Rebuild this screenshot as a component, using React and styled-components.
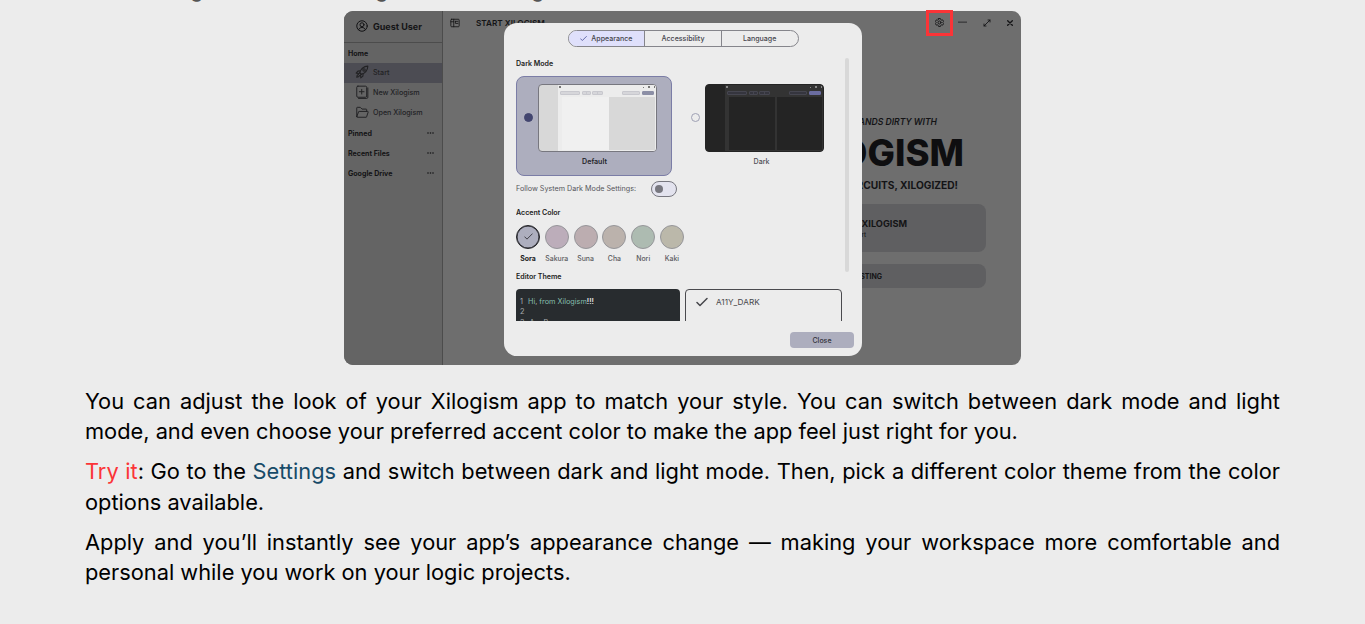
import React from "react";
import styled, { createGlobalStyle } from "styled-components";

const GlobalStyle = createGlobalStyle`
  * { box-sizing: border-box; }
  body { margin: 0; background: #ececec; font-family: Inter, "Liberation Sans", sans-serif; overflow: hidden; }
  p { margin: 0; }
  svg { display: block; flex: none; }
`;

const Page = styled.main`
  width: 1365px;
  height: 624px;
  overflow: hidden;
  display: flex;
  flex-direction: column;
  color: #000;
`;

const PreviousLine = styled.div`
  height: 11px;
  flex: none;
  display: flex;
  padding-left: 190px;
  overflow: hidden;
  font-size: 21.8px;
  line-height: 30px;
  color: #555;
`;
const Descender = styled.span`
  width: ${(p) => p.$w}px;
  flex: none;
  margin-top: -26px;
`;

const AppFrame = styled.section`
  position: relative;
  width: 677px;
  height: 354px;
  flex: none;
  margin-left: 344px;
  display: flex;
  border-radius: 9px;
  background: #6e6e6e;
  color: #141416;
`;

const Sidebar = styled.nav`
  width: 99px;
  background: #646464;
  border-right: 1px solid #4c4c4c;
  border-radius: 9px 0 0 9px;
`;
const UserBar = styled.div`
  height: 32px;
  display: flex;
  align-items: center;
  gap: 5px;
  padding: 0 0 1px 12px;
  border-bottom: 1px solid #4c4c4c;
  font-size: 9px;
  font-weight: 700;
`;
const SideHeading = styled.div`
  height: ${(p) => p.$h || 20}px;
  display: flex;
  align-items: center;
  justify-content: space-between;
  padding: 1px 8px 0 4px;
  font-size: 7.05px;
  font-weight: 700;
`;
const SideItem = styled.div`
  height: 20px;
  display: flex;
  align-items: center;
  gap: 4px;
  padding: 0 0 1px 11px;
  font-size: 7.15px;
  font-weight: 500;
  color: #222224;
  background: ${(p) => (p.$active ? "#4c4c53" : "transparent")};
`;

const Workspace = styled.div`
  flex: 1;
  display: flex;
  flex-direction: column;
  align-items: flex-end;
`;
const TitleBar = styled.header`
  align-self: stretch;
  height: 23px;
  display: flex;
  align-items: center;
  padding: 0 7px;
  font-size: 8.2px;
  font-weight: 600;
`;
const Title = styled.span`
  margin-left: 16px;
  flex: 1;
`;
const SettingsBox = styled.span`
  width: 27px;
  height: 26px;
  flex: none;
  display: grid;
  place-items: center;
  padding-right: 1px;
  border: 3px solid #fb3437;
`;
const WindowControls = styled.span`
  display: flex;
  align-items: center;
  gap: 15.5px;
  padding-left: 5px;
`;
const Tagline = styled.div`
  margin: 82px 84px 0 0;
  line-height: 12px;
  font-size: 8.6px;
  font-weight: 600;
  font-style: italic;
`;
const Wordmark = styled.div`
  margin: 4px 57px 0 0;
  line-height: 42px;
  font-size: 36.5px;
  font-weight: 800;
  color: #0e0e10;
`;
const Slogan = styled.div`
  margin: 4px 63px 0 0;
  line-height: 14px;
  font-size: 10.2px;
  font-weight: 700;
`;
const StartCard = styled.div`
  width: 440px;
  height: ${(p) => p.$h}px;
  margin: ${(p) => p.$top}px 35px 0 0;
  padding: 1px ${(p) => p.$pr}px 0 0;
  display: flex;
  flex-direction: column;
  justify-content: center;
  align-items: flex-end;
  border-radius: 8px;
  background: #5f5f61;
  font-size: ${(p) => p.$size}px;
  line-height: 12px;
  font-weight: 700;
`;
const CardHint = styled.small`
  padding-right: 41px;
  font-size: 6px;
  line-height: 10px;
  font-weight: 500;
`;

const Modal = styled.div`
  position: absolute;
  left: 160px;
  top: 11.5px;
  width: 357.5px;
  height: 333.5px;
  display: flex;
  flex-direction: column;
  padding: 7.5px 7.5px 8px 12px;
  border-radius: 13px;
  background: #ececec;
  color: #1c1c22;
`;
const Tabs = styled.div`
  display: flex;
  width: 231px;
  height: 16.5px;
  margin-left: 51.5px;
  flex: none;
  border: 1px solid #85858b;
  border-radius: 9px;
  overflow: hidden;
`;
const Tab = styled.div`
  flex: 1;
  display: flex;
  align-items: center;
  justify-content: center;
  gap: 4px;
  font-size: 7.05px;
  font-weight: 500;
  color: #45454c;
  background: ${(p) => (p.$active ? "#dfe0fb" : "transparent")};
  & + & { border-left: 1px solid #85858b; }
`;
const ScrollArea = styled.div`
  display: flex;
  justify-content: space-between;
  height: 263px;
  margin-top: 11px;
  overflow: hidden;
`;
const ScrollThumb = styled.div`
  width: 4px;
  height: 214px;
  margin-right: 5px;
  border-radius: 2px;
  background: #d8d8d8;
`;
const Settings = styled.div`
  width: 326px;
`;
const Heading = styled.h3`
  margin: 0;
  padding-top: ${(p) => p.$top || 0}px;
  font-size: 7.05px;
  line-height: 10px;
  font-weight: 600;
`;
const ModeRow = styled.div`
  display: flex;
  gap: 11px;
  margin-top: 7px;
`;
const ModeCard = styled.div`
  width: 156px;
  height: 100px;
  display: flex;
  gap: 5px;
  padding: 7px 0 0 7px;
  border: 1px solid ${(p) => (p.$active ? "#7b7da6" : "transparent")};
  border-radius: 8px;
  background: ${(p) => (p.$active ? "#adaebe" : "transparent")};
`;
const Radio = styled.span`
  width: 9px;
  height: 9px;
  margin-top: 29px;
  flex: none;
  border-radius: 50%;
  border: 1.4px solid ${(p) => (p.$active ? "#42456f" : "#9fa1b4")};
  background: ${(p) => (p.$active ? "#42456f" : "transparent")};
`;
const ModeFigure = styled.div`
  display: flex;
  flex-direction: column;
  align-items: center;
  gap: 5px;
  font-size: 7.1px;
  line-height: 10px;
  font-weight: ${(p) => (p.$bold ? 600 : 500)};
  color: ${(p) => (p.$bold ? "#25252b" : "#505056")};
`;
const ModeLabel = styled.span`
  padding-right: 6px;
`;

const Preview = styled.div`
  width: 119px;
  height: 68px;
  display: flex;
  overflow: hidden;
  border: 1px solid ${(p) => p.$c.edge};
  border-radius: 4px;
  background: ${(p) => p.$c.side};
`;
const PreviewMain = styled.div`
  flex: 1;
  margin-left: 19px;
  padding: 0 1px 1px;
  display: flex;
  flex-direction: column;
  background: ${(p) => p.$c.bar};
`;
const PreviewTop = styled.div`
  height: 6px;
  display: flex;
  gap: 4px;
  align-items: center;
  padding: 0 0 1px 0;
`;
const Dot = styled.i`
  width: 1.5px;
  height: ${(p) => p.$h || 1.5}px;
  background: ${(p) => p.$c.ink};
  &:first-child { margin-right: auto; }
`;
const PreviewTools = styled.div`
  height: 4px;
  display: flex;
  padding: 0 1px;
  gap: 1.5px;
`;
const Chip = styled.i`
  width: ${(p) => p.$w}px;
  height: 4px;
  flex: none;
  border-radius: 1px;
  border: 1px solid ${(p) => (p.$primary ? p.$c.primary : p.$c.chipEdge)};
  background: ${(p) => (p.$primary ? p.$c.primary : p.$c.chip)};
  margin-left: ${(p) => (p.$push ? "auto" : 0)};
`;
const SplitChip = styled(Chip)`
  display: flex;
  justify-content: center;
  &::after { content: ""; width: 1px; background: ${(p) => p.$c.chipEdge}; }
`;
const PreviewPanes = styled.div`
  flex: 1;
  display: flex;
  gap: ${(p) => p.$c.gap}px;
  margin-top: 2px;
  padding-left: 3px;
`;
const Pane = styled.i`
  flex: 1;
  background: ${(p) => p.$bg};
`;

const FollowRow = styled.div`
  height: 16px;
  margin-top: 5px;
  display: flex;
  align-items: center;
  gap: 14.5px;
  font-size: 7.2px;
  color: #55555a;
`;
const Toggle = styled.span`
  width: 26px;
  height: 16px;
  padding: 3px;
  border: 1.3px solid #77777f;
  border-radius: 8px;
  background: #e3e3ee;
  &::before {
    content: "";
    display: block;
    width: 8px;
    height: 8px;
    border-radius: 50%;
    background: #77777f;
  }
`;
const Swatches = styled.div`
  display: flex;
  margin-top: 7px;
`;
const Swatch = styled.div`
  width: 28.8px;
  flex: none;
  margin-left: ${(p) => (p.$active ? -2.4 : 0)}px;
  display: flex;
  flex-direction: column;
  align-items: center;
  gap: 5px;
  font-size: 6.9px;
  line-height: 10px;
  white-space: nowrap;
  font-weight: ${(p) => (p.$active ? 700 : 500)};
  color: ${(p) => (p.$active ? "#1c1c22" : "#5b5b60")};
`;
const Disc = styled.span`
  width: 24px;
  height: 24px;
  display: grid;
  place-items: center;
  border-radius: 50%;
  border: 1px solid ${(p) => (p.$active ? "#222226" : "#96969a")};
  box-shadow: ${(p) => (p.$active ? "inset 0 0 0 0.5px #222226" : "none")};
  background: ${(p) => p.$bg};
`;
const ThemeRow = styled.div`
  display: flex;
  gap: 5px;
  margin-top: 7px;
`;
const CodeSample = styled.div`
  width: 164px;
  height: 60px;
  flex: none;
  padding: 8px 4px;
  border-radius: 4px 4px 0 0;
  background: #282c2f;
  color: #a9adb0;
  font-size: 7.3px;
  line-height: 10.5px;
`;
const CodeLine = styled.div`
  display: flex;
  gap: 5px;
`;
const Mint = styled.span`
  color: #86bfae;
`;
const Bang = styled.span`
  color: #e4e4e4;
  font-weight: 600;
`;
const ThemeName = styled.div`
  width: 157px;
  height: 60px;
  display: flex;
  gap: 8px;
  padding: 6px 10px;
  border: 1px solid #4a4a4e;
  border-radius: 4px;
  font-size: 8.2px;
  line-height: 12px;
  color: #47474b;
`;
const CloseButton = styled.button`
  align-self: flex-end;
  width: 64px;
  height: 16px;
  margin-top: auto;
  padding: 0.5px 0 0;
  border: 0;
  border-radius: 4px;
  background: #adaebe;
  color: #33333a;
  font: 500 7px/16px Inter, sans-serif;
`;

const Article = styled.article`
  width: 1195px;
  margin: 21px 0 0 85px;
  display: flex;
  flex-direction: column;
  gap: 9.9px;
  font-size: 21.8px;
  line-height: 30.3px;
  text-align: justify;
`;
const Accent = styled.span`
  color: ${(p) => p.$color};
`;

const light = { edge: "#77777f", side: "#d8d8d8", bar: "#ececec", ink: "#777", chip: "#d6d6da", chipEdge: "#c8c8ce", primary: "#8c8fa6", gap: 0 };
const dark = { edge: "#242424", side: "#242424", bar: "#333333", ink: "#888", chip: "#35353e", chipEdge: "#464650", primary: "#6a6ca0", gap: 2 };

function WindowPreview({ c, left, right }) {
  return (
    <Preview $c={c}>
      <PreviewMain $c={c}>
        <PreviewTop><Dot $c={c} /><Dot $c={c} $h={1} /><Dot $c={c} /><Dot $c={c} /></PreviewTop>
        <PreviewTools>
          <Chip $c={c} $w={20} /><SplitChip $c={c} $w={9} /><SplitChip $c={c} $w={10.5} />
          <Chip $c={c} $w={18} $push /><Chip $c={c} $w={12.5} $primary />
        </PreviewTools>
        <PreviewPanes $c={c}><Pane $bg={left} /><Pane $bg={right} /></PreviewPanes>
      </PreviewMain>
    </Preview>
  );
}

function Icon({ size, sw = 1.5, children }) {
  return (
    <svg width={size} height={size} viewBox="0 0 24 24" fill="none" stroke="currentColor" strokeWidth={sw} strokeLinecap="round" strokeLinejoin="round">
      {children}
    </svg>
  );
}
const Check = ({ size, sw = 2 }) => <Icon size={size} sw={sw}><path d="M2 13l6 6L22 5" /></Icon>;
const More = () => (
  <svg width="7" height="2" viewBox="0 0 7 2" fill="currentColor">
    <circle cx="1" cy="1" r=".8" /><circle cx="3.5" cy="1" r=".8" /><circle cx="6" cy="1" r=".8" />
  </svg>
);

const accents = [
  ["Sora", "#adaebe"], ["Sakura", "#bcadba"], ["Suna", "#bcadb0"],
  ["Cha", "#bbb2ac"], ["Nori", "#adbbb1"], ["Kaki", "#bbb8aa"],
];

export default function App() {
  return (
    <Page>
      <GlobalStyle />
      <PreviousLine>
        <Descender $w={185}>g</Descender><Descender $w={156}>g</Descender><Descender $w={20}>g</Descender>
      </PreviousLine>
      <AppFrame>
        <Sidebar>
          <UserBar>
            <Icon size={12} sw={2}>
              <circle cx="12" cy="12" r="10.5" /><circle cx="12" cy="9.5" r="4" /><path d="M5 19.500c1.500-3.200 4-4.500 7-4.500s5.500 1.300 7 4.500" />
            </Icon>
            Guest User
          </UserBar>
          <SideHeading $h={19.5}>Home</SideHeading>
          <SideItem $active>
            <Icon size={14} sw={1.9}>
              <path d="M8 13C10 7 14 2.500 22 2c-.5 8-5 12-11 14z" /><circle cx="15.500" cy="8.500" r="2" />
              <path d="M9 10l-4 .5L2 14l5 .5M14 15l-.5 4L10 22l-.5-5M6 16c-2 1-3 3-3 5 2 0 4-1 5-3M8 13l3 3" />
            </Icon>
            Start
          </SideItem>
          <SideItem>
            <Icon size={14} sw={1.7}><path d="M5 2h13a2 2 0 0 1 2 2v15a2 2 0 0 1-2 2H5a2 2 0 0 1-2-2V4a2 2 0 0 1 2-2zM11.500 7.500v8M7.500 11.500h8M22 5v16a2 2 0 0 1-2 2H6" /></Icon>
            New Xilogism
          </SideItem>
          <SideItem>
            <Icon size={14} sw={1.7}><path d="M3 20V5a1 1 0 0 1 1-1h5l3 3h7a1 1 0 0 1 1 1v3M3 20l3-8a1 1 0 0 1 1-1h14.500a1 1 0 0 1 1 1.300L20 20a1 1 0 0 1-1 1H4a1 1 0 0 1-1-1z" /></Icon>
            Open Xilogism
          </SideItem>
          <SideHeading>Pinned <More /></SideHeading>
          <SideHeading>Recent Files <More /></SideHeading>
          <SideHeading>Google Drive <More /></SideHeading>
        </Sidebar>
        <Workspace>
          <TitleBar>
            <Icon size={10} sw={2}><rect x="2" y="3" width="20" height="18" rx="2" /><path d="M9 3v18M2 9h7M13 8v5h6M13 8h6" /></Icon>
            <Title>START XILOGISM</Title>
            <SettingsBox>
              <Icon size={9} sw={2.4}>
                <path d="M9.500 1.500h5l1 3 2 1.200 3-.7 2.500 4.300-2 2.200v1l2 2.200-2.500 4.300-3-.7-2 1.200-1 3h-5l-1-3-2-1.200-3 .7L1 14.700l2-2.200v-1L1 9.300 3.500 5l3 .7 2-1.200z" />
                <circle cx="12" cy="12" r="4" />
              </Icon>
            </SettingsBox>
            <WindowControls>
              <Icon size={9} sw={2}><path d="M1 11h22" /></Icon>
              <Icon size={8} sw={2.6}><path d="M15 3h6v6M21 3l-18 18M9 21H3v-6" /></Icon>
              <Icon size={8} sw={4}><path d="M5 5l14 14M19 5L5 19" /></Icon>
            </WindowControls>
          </TitleBar>
          <Tagline>HANDS DIRTY WITH</Tagline>
          <Wordmark>XILOGISM</Wordmark>
          <Slogan>CIRCUITS, XILOGIZED!</Slogan>
          <StartCard $h={48} $top={12} $pr={79} $size={9.2}>XILOGISM<CardHint>Start</CardHint></StartCard>
          <StartCard $h={24} $top={12} $pr={104} $size={7}>EXISTING</StartCard>
        </Workspace>

        <Modal>
          <Tabs>
            <Tab $active><Accent $color="#555ca0"><Check size={7} sw={3} /></Accent>Appearance</Tab>
            <Tab>Accessibility</Tab>
            <Tab>Language</Tab>
          </Tabs>
          <ScrollArea>
            <Settings>
              <Heading $top={1}>Dark Mode</Heading>
              <ModeRow>
                <ModeCard $active>
                  <Radio $active />
                  <ModeFigure $bold><WindowPreview c={light} left="#f0f0f0" right="#d8d8d8" /><ModeLabel>Default</ModeLabel></ModeFigure>
                </ModeCard>
                <ModeCard>
                  <Radio />
                  <ModeFigure><WindowPreview c={dark} left="#242424" right="#242424" /><ModeLabel>Dark</ModeLabel></ModeFigure>
                </ModeCard>
              </ModeRow>
              <FollowRow>Follow System Dark Mode Settings: <Toggle /></FollowRow>
              <Heading $top={11}>Accent Color</Heading>
              <Swatches>
                {accents.map(([name, color], i) => (
                  <Swatch key={name} $active={i === 0}>
                    <Disc $bg={color} $active={i === 0}>{i === 0 && <Check size={9} />}</Disc>
                    {name}
                  </Swatch>
                ))}
              </Swatches>
              <Heading $top={8}>Editor Theme</Heading>
              <ThemeRow>
                <CodeSample>
                  <CodeLine>1 <span><Mint>Hi</Mint>, <Mint>from Xilogism</Mint><Bang>!!!</Bang></span></CodeLine>
                  <CodeLine>2</CodeLine>
                  <CodeLine>3 <span>A = B</span></CodeLine>
                </CodeSample>
                <ThemeName><Check size={12} sw={3} />A11Y_DARK</ThemeName>
              </ThemeRow>
            </Settings>
            <ScrollThumb />
          </ScrollArea>
          <CloseButton>Close</CloseButton>
        </Modal>
      </AppFrame>

      <Article>
        <p>You can adjust the look of your Xilogism app to match your style. You can switch between dark mode and light mode, and even choose your preferred accent color to make the app feel just right for you.</p>
        <p><Accent $color="#fb3437">Try it</Accent>: Go to the <Accent $color="#174a68">Settings</Accent> and switch between dark and light mode. Then, pick a different color theme from the color options available.</p>
        <p>Apply and you’ll instantly see your app’s appearance change — making your workspace more comfortable and personal while you work on your logic projects.</p>
      </Article>
    </Page>
  );
}
